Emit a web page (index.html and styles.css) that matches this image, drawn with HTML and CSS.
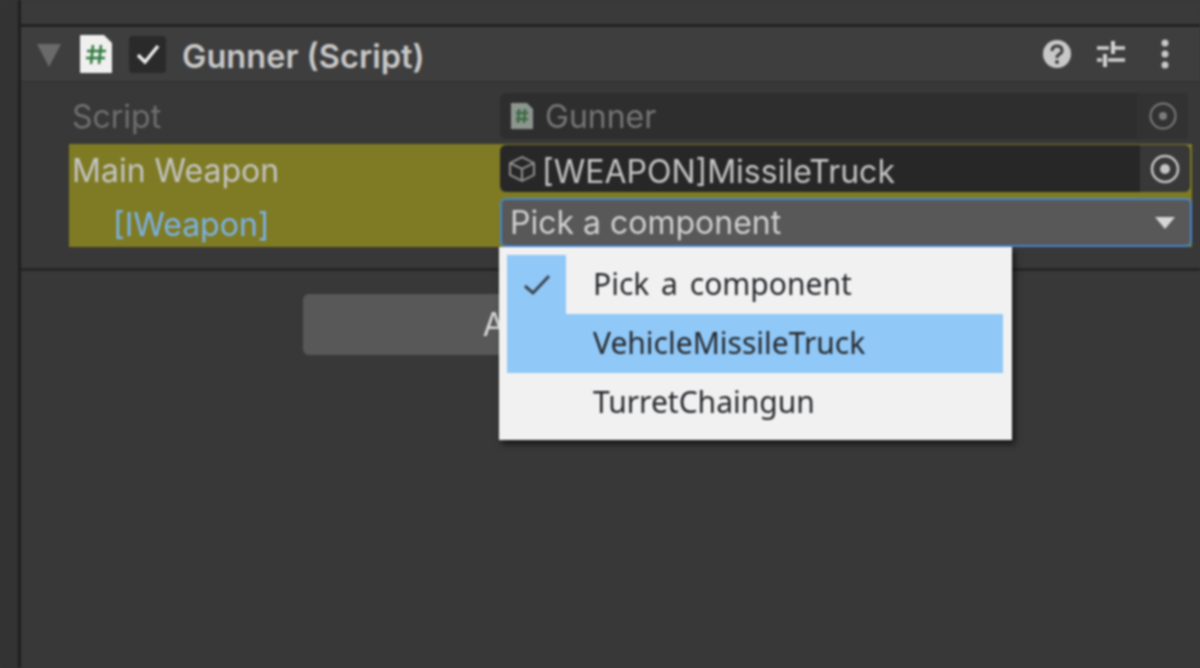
FILE: index.html
```html
<!DOCTYPE html>
<html lang="en">
<head>
    <meta charset="UTF-8">
    <meta name="viewport" content="width=device-width, initial-scale=1.0">
    <title>Gunner (Script)</title>
    <link rel="stylesheet" href="styles.css">
</head>
<body>
    <div class="gutter"></div>

    <div class="inspector">
        <div class="top-strip"></div>

        <!-- Component header -->
        <div class="comp-header">
            <span class="foldout"></span>
            <svg class="script-icon" width="34" height="40" viewBox="0 0 34 40">
                <path d="M1 2 Q1 1 2 1 H25 L33 9 V38 Q33 39 32 39 H2 Q1 39 1 38 Z" fill="#f0f0f0"/>
                <path d="M14 11 L12 30 M22 11 L20 30 M8 17 H27 M7 24 H26" stroke="#2f7a3c" stroke-width="2.500" fill="none"/>
            </svg>
            <span class="toggle">
                <svg width="26" height="22" viewBox="0 0 26 22">
                    <path d="M3 12 L10 19 L23 3" stroke="#eeeeee" stroke-width="3.500" fill="none"/>
                </svg>
            </span>
            <span class="comp-title">Gunner (Script)</span>
            <span class="header-icons">
                <svg width="30" height="30" viewBox="0 0 30 30">
                    <circle cx="15" cy="15" r="14" fill="#c8c8c8"/>
                    <path d="M10 12 Q10 7 15 7 Q20 7 20 11.500 Q20 14 17 15.500 Q15 16.500 15 19" stroke="#3a3a3a" stroke-width="3" fill="none"/>
                    <circle cx="15" cy="23" r="2" fill="#3a3a3a"/>
                </svg>
                <svg width="30" height="30" viewBox="0 0 30 30">
                    <path d="M1 9 H13 M19 9 H29 M1 21 H6 M12 21 H29" stroke="#d0d0d0" stroke-width="3.500" fill="none"/>
                    <path d="M17 2 V15 M9 15 V28" stroke="#d0d0d0" stroke-width="4" fill="none"/>
                </svg>
                <svg class="dots" width="10" height="30" viewBox="0 0 10 30">
                    <circle cx="5" cy="4" r="3.500" fill="#c8c8c8"/>
                    <circle cx="5" cy="15" r="3.500" fill="#c8c8c8"/>
                    <circle cx="5" cy="26" r="3.500" fill="#c8c8c8"/>
                </svg>
            </span>
        </div>

        <!-- Properties -->
        <div class="props">
            <div class="row row-script">
                <span class="prop-label muted">Script</span>
                <div class="field field-disabled">
                    <svg class="field-icon" width="24" height="28" viewBox="0 0 24 28">
                        <path d="M1 1 H17 L23 7 V27 H1 Z" fill="#8d968e"/>
                        <path d="M9 7 L8 21 M15 7 L14 21 M6 11 H18 M6 17 H18" stroke="#3f6b47" stroke-width="2.500" fill="none"/>
                    </svg>
                    <span class="field-text">Gunner</span>
                    <span class="picker">
                        <svg width="28" height="28" viewBox="0 0 28 28">
                            <circle cx="14" cy="14" r="12.500" stroke="#7c7c7c" stroke-width="2" fill="none"/>
                            <circle cx="14" cy="14" r="4" fill="#7c7c7c"/>
                        </svg>
                    </span>
                </div>
            </div>

            <div class="highlight">
                <div class="row row-weapon">
                    <span class="prop-label">Main Weapon</span>
                    <div class="field field-object">
                        <svg class="field-icon" width="28" height="28" viewBox="0 0 28 28">
                            <path d="M14 2 L26 8 V20 L14 26 L2 20 V8 Z M2 8 L14 14 L26 8 M14 14 V26" stroke="#8f8f8f" stroke-width="2" fill="none"/>
                        </svg>
                        <span class="field-text">[WEAPON]MissileTruck</span>
                        <span class="picker">
                            <svg width="30" height="30" viewBox="0 0 30 30">
                                <circle cx="15" cy="15" r="13" stroke="#c4c4c4" stroke-width="2.500" fill="none"/>
                                <circle cx="15" cy="15" r="5" fill="#c4c4c4"/>
                            </svg>
                        </span>
                    </div>
                </div>
                <div class="row row-iface">
                    <span class="prop-label iface">[IWeapon]</span>
                    <div class="dropdown">
                        <span class="dropdown-text">Pick a component</span>
                        <span class="dropdown-arrow"></span>
                    </div>
                </div>
            </div>
        </div>

        <div class="add-area">
            <button class="add-button">Add Component</button>
        </div>
    </div>

    <!-- Open popup -->
    <div class="menu">
        <div class="menu-item">
            <span class="menu-check">
                <svg width="30" height="24" viewBox="0 0 30 24">
                    <path d="M3 13 L11 20 L27 3" stroke="#3a4450" stroke-width="3" fill="none"/>
                </svg>
            </span>
            <span class="menu-text">Pick a component</span>
        </div>
        <div class="menu-item active"><span class="menu-check"></span><span class="menu-text">VehicleMissileTruck</span></div>
        <div class="menu-item"><span class="menu-check"></span><span class="menu-text">TurretChaingun</span></div>
    </div>
</body>
</html>
```

FILE: styles.css
```css
* {
    box-sizing: border-box;
}

html, body {
    margin: 0;
    height: 100%;
    overflow: hidden;
}

body {
    display: flex;
    position: relative;
    background: #383838;
    font-family: 'Inter', sans-serif;
    font-size: 32px;
    color: #c4c4c4;
    filter: blur(0.9px);
}

.gutter {
    width: 21px;
    background: #333333;
    border-right: 3px solid #1f1f1f;
    flex-shrink: 0;
}

.inspector {
    flex: 1;
    display: flex;
    flex-direction: column;
}

.top-strip {
    height: 27px;
    background: #3a3a3a;
    border-bottom: 3px solid #222222;
}

.comp-header {
    height: 55px;
    display: flex;
    align-items: center;
    padding-left: 16px;
    background: #3e3e3e;
    border-bottom: 1px solid #303030;
}

.foldout {
    width: 0;
    height: 0;
    border-left: 12px solid transparent;
    border-right: 12px solid transparent;
    border-top: 23px solid #6a6a6a;
    margin: 3px 18px 0 0;
}

.script-icon {
    margin-right: 16px;
}

.toggle {
    width: 37px;
    height: 37px;
    display: flex;
    align-items: center;
    justify-content: center;
    background: #2a2a2a;
    border-radius: 4px;
    margin-right: 16px;
}

.comp-title {
    font-size: 32.6px;
    font-weight: 600;
    color: #c8c8c8;
    padding-top: 3px;
}

.header-icons {
    margin-left: auto;
    display: flex;
    align-items: center;
    gap: 24px;
    padding-right: 30px;
}

.dots {
    margin-left: 10px;
}

.props {
    padding: 11px 8px 0 48px;
    height: 189px;
    border-bottom: 3px solid #262626;
}

.row {
    display: flex;
    align-items: center;
}

.row-script {
    height: 46px;
    margin-bottom: 5px;
}

.prop-label {
    width: 431px;
    padding-left: 3px;
    flex-shrink: 0;
}

.muted {
    color: #6f6f6f;
}

.highlight {
    background: #7f7b24;
    height: 103px;
}

.row-weapon {
    height: 49px;
    margin-bottom: 5px;
    align-items: flex-start;
    padding-top: 1px;
}

.row-weapon .prop-label {
    padding-top: 6px;
}

.row-weapon .field-text {
    padding-top: 6px;
}

.row-iface {
    height: 49px;
}

.iface {
    padding: 3px 0 0 44px;
    color: #7bb2e8;
}

.field {
    flex: 1;
    height: 47px;
    display: flex;
    align-items: center;
    border-radius: 6px;
    padding-left: 10px;
    overflow: hidden;
}

.field-disabled {
    height: 46px;
    margin-right: 4px;
    background: #2e2e2e;
    color: #767676;
}

.field-object {
    margin-right: 2px;
    background: #272727;
    padding-left: 8px;
}

.field-icon {
    margin-right: 8px;
    flex-shrink: 0;
}

.field-object .field-icon {
    margin-right: 6px;
}

.field-disabled .field-icon {
    margin-right: 11px;
}

.field-text {
    flex: 1;
    padding-top: 1px;
}

.picker {
    width: 50px;
    height: 100%;
    display: flex;
    align-items: center;
    justify-content: center;
    background: #383838;
}

.field-disabled .picker {
    width: 51px;
    background: #323232;
}

.dropdown {
    flex: 1;
    height: 49px;
    display: flex;
    align-items: center;
    justify-content: space-between;
    padding: 0 15px 0 8px;
    background: #585858;
    border: 2px solid #4585cc;
    border-radius: 6px;
    color: #d0d0d0;
}

.dropdown-arrow {
    width: 0;
    height: 0;
    border-left: 10px solid transparent;
    border-right: 10px solid transparent;
    border-top: 12px solid #d6d6d6;
}

.add-area {
    padding: 23px 9px 0 0;
    display: flex;
    justify-content: center;
}

.add-button {
    width: 606px;
    height: 61px;
    background: #585858;
    border: 0;
    border-radius: 6px;
    font: inherit;
    color: #d8d8d8;
}

.menu {
    position: absolute;
    left: 499px;
    top: 247px;
    width: 513px;
    height: 193px;
    padding: 8px 9px 0 8px;
    background: #f1f1f1;
    box-shadow: 3px 4px 6px rgba(0, 0, 0, 0.6);
    font-family: 'Noto Sans', sans-serif;
    font-size: 30px;
    word-spacing: 4px;
    color: #26282c;
}

.menu-item {
    height: 59px;
    display: flex;
    align-items: center;
}

.menu-item.active {
    background: #90c8f7;
}

.menu-check {
    width: 59px;
    height: 59px;
    margin-right: 27px;
    display: flex;
    align-items: center;
    justify-content: center;
}

.menu-item:first-child .menu-check {
    background: #90c8f7;
}

.menu-text {
    padding-bottom: 2px;
}
```
